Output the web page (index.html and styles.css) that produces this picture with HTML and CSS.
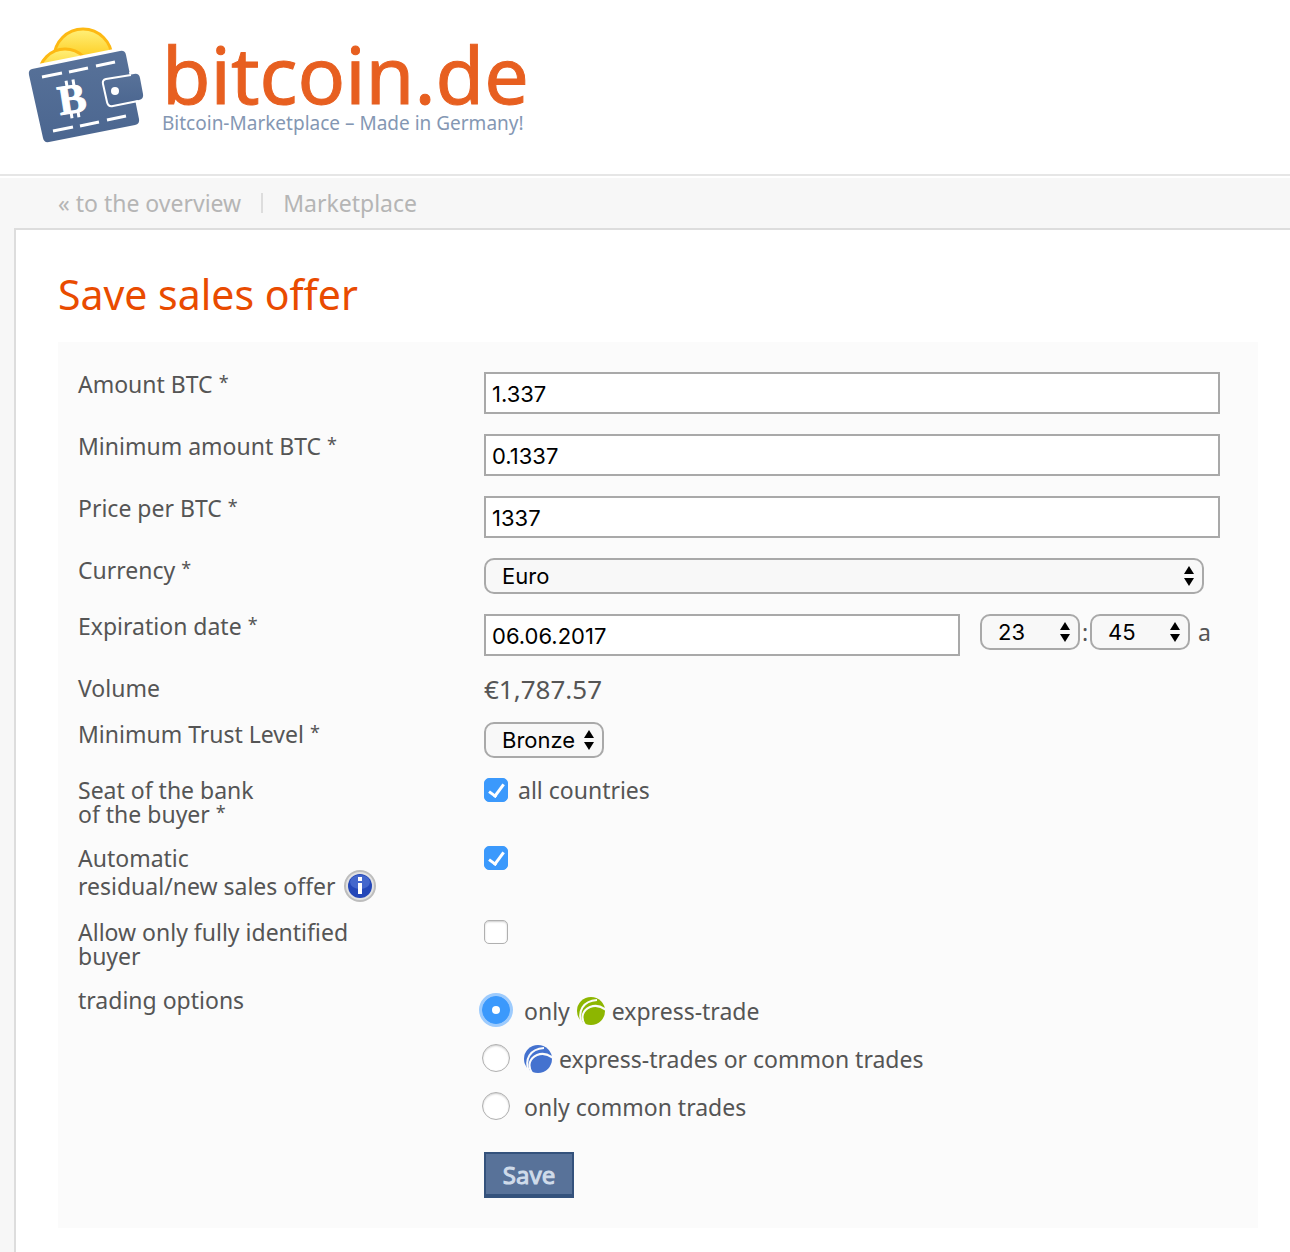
FILE: index.html
```html
<!DOCTYPE html>
<html lang="en">
<head>
  <meta charset="UTF-8">
  <meta name="viewport" content="width=device-width, initial-scale=1.0">
  <title>Save sales offer - bitcoin.de</title>
  <link rel="stylesheet" href="styles.css">
</head>
<body>

  <!-- shared shapes -->
  <svg class="sprite" aria-hidden="true">
    <symbol id="arrows" viewBox="0 0 10 20">
      <path d="M5 0l5 8H0zM5 20l5-8H0z"/>
    </symbol>
    <symbol id="express" viewBox="0 0 28 28">
      <circle cx="14" cy="14" r="14"/>
      <path class="gap" d="M8 28C3 20 6 13 13 10c5-2 11-1 16 3"/>
      <path class="gap" d="M5 27C0 14 6 4 20 3"/>
    </symbol>
  </svg>

  <header class="header">
    <a class="logo" href="#">
      <svg class="wallet" viewBox="28 27 116 116" aria-hidden="true">
        <defs>
          <linearGradient id="coin" x1="0" y1="0" x2="0" y2="1">
            <stop offset="0" stop-color="#fff07a"/>
            <stop offset=".6" stop-color="#fdc60f"/>
          </linearGradient>
          <linearGradient id="leather" x1="0" y1="0" x2="0" y2="1">
            <stop offset="0" stop-color="#587299"/>
            <stop offset="1" stop-color="#4b6690"/>
          </linearGradient>
        </defs>
        <circle cx="83" cy="58" r="29" fill="url(#coin)" stroke="#fdb913" stroke-width="3"/>
        <circle cx="65" cy="75" r="26" fill="url(#coin)" stroke="#fdb913" stroke-width="3"/>
        <path d="M28 66L124 47l5 20-90 70z" fill="#fff"/>
        <path d="M32 69l88-18q5-1 6 4l13 64q1 5-4 6l-86 17q-5 1-6-4L29 75q-1-5 3-6z" fill="url(#leather)"/>
        <path d="M129 72l13-2 8 33-13 2z" fill="#fff"/>
        <path d="M106 79l28-5q5-1 6 4l3 16q1 5-4 6l-26 6q-5 1-6-4l-4-18q-1-4 3-5z" fill="url(#leather)"/>
        <path d="M131 75l-25 4q-4 1-3 5l4 18q1 5 6 4l25-5" fill="none" stroke="#fff" stroke-width="2"/>
        <circle cx="115" cy="91" r="4" fill="#fff"/>
        <path d="M42 77l20-4M69 72l19-4M96 66l19-4M53 131l20-4M80 126l19-4M107 120l19-4" stroke="#fff" stroke-width="3"/>
        <g transform="rotate(-9 72 99)" stroke="#fff" stroke-width="3">
          <path d="M69 80v6M76 80v6M69 112v6M76 112v6"/>
          <text class="wallet-b" x="58" y="113">B</text>
        </g>
      </svg>
      <span class="logo-text">
        <span class="logo-name">bitcoin.de</span>
        <span class="logo-claim">Bitcoin-Marketplace – Made in Germany!</span>
      </span>
    </a>
  </header>

  <nav class="nav">
    <a href="#">« to the overview</a>
    <span class="nav-sep"></span>
    <a href="#">Marketplace</a>
  </nav>

  <main class="content">
    <h1>Save sales offer</h1>

    <form class="form">
      <div class="row">
        <label for="amount">Amount BTC <sup>*</sup></label>
        <input class="text" type="text" id="amount" value="1.337">
      </div>

      <div class="row">
        <label for="min-amount">Minimum amount BTC <sup>*</sup></label>
        <input class="text" type="text" id="min-amount" value="0.1337">
      </div>

      <div class="row">
        <label for="price">Price per BTC <sup>*</sup></label>
        <input class="text" type="text" id="price" value="1337">
      </div>

      <div class="row">
        <label for="currency">Currency <sup>*</sup></label>
        <div class="select currency">
          <select id="currency"><option>Euro</option></select>
          <svg><use href="#arrows"/></svg>
        </div>
      </div>

      <div class="row">
        <label for="date">Expiration date <sup>*</sup></label>
        <div class="expiry">
          <input class="text" type="text" id="date" value="06.06.2017">
          <div class="time">
            <div class="select hour">
              <select aria-label="Hour"><option>23</option></select>
              <svg><use href="#arrows"/></svg>
            </div>
            <span class="colon">:</span>
            <div class="select hour">
              <select aria-label="Minute"><option>45</option></select>
              <svg><use href="#arrows"/></svg>
            </div>
            <span class="suffix">a</span>
          </div>
        </div>
      </div>

      <div class="row">
        <span>Volume</span>
        <span class="volume">€1,787.57</span>
      </div>

      <div class="row">
        <label for="trust">Minimum Trust Level <sup>*</sup></label>
        <div class="select trust">
          <select id="trust"><option>Bronze</option></select>
          <svg><use href="#arrows"/></svg>
        </div>
      </div>

      <div class="row">
        <span>Seat of the bank<br>of the buyer <sup>*</sup></span>
        <label class="check"><input type="checkbox" checked> all countries</label>
      </div>

      <div class="row">
        <label for="residual">Automatic
          <span class="with-info">residual/new sales offer
            <svg class="info" viewBox="0 0 32 32" aria-hidden="true">
              <circle cx="16" cy="16" r="16" fill="#bdbdbd"/>
              <circle cx="16" cy="16" r="14" fill="#e2e2e2"/>
              <circle cx="16" cy="16" r="12" fill="#2447b8"/>
              <ellipse cx="16" cy="12" rx="10" ry="7" fill="#4467cc"/>
              <path d="M14 7h4v4h-4zM14 13h4v11h-4z" fill="#fff"/>
            </svg>
          </span>
        </label>
        <div class="check"><input type="checkbox" id="residual" checked></div>
      </div>

      <div class="row">
        <label for="identified">Allow only fully identified<br>buyer</label>
        <div class="check"><input type="checkbox" id="identified"></div>
      </div>

      <div class="row">
        <span>trading options</span>
        <div class="options">
          <label class="option"><input type="radio" name="trading" checked>
            <span>only</span>
            <svg class="express green" aria-hidden="true"><use href="#express"/></svg>
            <span>express-trade</span>
          </label>
          <label class="option"><input type="radio" name="trading">
            <svg class="express blue" aria-hidden="true"><use href="#express"/></svg>
            <span>express-trades or common trades</span>
          </label>
          <label class="option"><input type="radio" name="trading">
            <span>only common trades</span>
          </label>
          <button class="save" type="button">Save</button>
        </div>
      </div>
    </form>
  </main>

</body>
</html>
```
FILE: styles.css
```css
*{box-sizing:border-box}
body{
  margin:0;
  min-height:100vh;
  display:flex;
  flex-direction:column;
  background:#f7f7f7;
  color:#555;
  font-family:"Noto Sans",sans-serif;
  font-size:23px;
  line-height:24px;
}
a{text-decoration:none}
.sprite{position:absolute;width:0;height:0}

/* header */
.header{
  padding:27px 28px 31px;
  background:#fff;
  border-bottom:2px solid #e6e6e6;
}
.logo{display:flex;gap:18px}
.wallet{width:116px;height:116px;flex:none}
.wallet-b{font:bold 42px "Liberation Serif",serif;fill:#fff;stroke-width:1px}
.logo-text{display:flex;flex-direction:column;padding-top:10px}
.logo-name{
  color:#e75f20;
  font-size:79px;
  line-height:74px;
  -webkit-text-stroke:1px #e75f20;
}
.logo-claim{
  color:#8497b3;
  font-size:19px;
  line-height:24px;
}

.nav{
  display:flex;
  align-items:center;
  height:52px;
  padding-left:58px;
  border-top:2px solid #fff;
}
.nav a{color:#b5b5b5}
.nav-sep{width:2px;height:20px;margin:0 20px;background:#ddd}

/* content */
.content{
  flex:1;
  margin-left:14px;
  padding:40px 32px 24px 42px;
  background:#fff;
  border:solid #ddd;
  border-width:2px 0 0 2px;
}
h1{
  margin:0 0 24px;
  color:#e94b00;
  font-size:41px;
  font-weight:400;
  line-height:48px;
}

.form{
  display:flex;
  flex-direction:column;
  gap:20px;
  padding:30px 38px 30px 20px;
  background:#fbfbfb;
}
.row{
  display:grid;
  grid-template-columns:386px 1fr;
  column-gap:20px;
  align-items:start;
}
sup{font-size:18px;line-height:0;vertical-align:4px}

.text,select{
  width:100%;
  color:#000;
  font-family:Inter,sans-serif;
  font-size:22px;
  border:2px solid #a9a9a9;
}
.text{height:42px;padding:3px 6px 1px;background:#fff}
.select{position:relative;height:36px}
select{
  display:block;
  height:36px;
  padding:0 16px;
  appearance:none;
  background:#f8f8f8;
  border-radius:10px;
}
.select svg{
  position:absolute;
  top:8px;
  right:10px;
  width:10px;
  height:20px;
  pointer-events:none;
}
.currency{margin-right:16px}
.trust{width:120px}
.hour{width:100px}

.expiry{display:flex;gap:20px}
.expiry .text{flex:1;min-width:0}
.time{display:flex;line-height:36px}
.colon{width:10px;text-align:center}
.suffix{width:30px;padding-left:8px}
.volume{font-size:26px;line-height:26px}

/* tick boxes and radios */
.check{display:flex;align-items:center;gap:10px;height:24px}
input[type=checkbox],
input[type=radio]{
  position:relative;
  flex:none;
  margin:0;
  appearance:none;
  background:#fff;
  border:1px solid #b0b0b0;
  box-shadow:inset 0 1px 2px #ccc;
}
input[type=checkbox]{width:24px;height:24px;border-radius:5px}
input[type=radio]{width:28px;height:28px;border-radius:50%}
input:checked{background:#3b99fc;border-color:#3b99fc;box-shadow:none}
input[type=checkbox]:checked::after{
  content:"";
  box-sizing:border-box;
  position:absolute;
  left:7px;
  top:2px;
  width:9px;
  height:16px;
  border:solid #fff;
  border-width:0 3px 3px 0;
  transform:rotate(36deg);
}
input[type=radio]:checked{box-shadow:0 0 0 3px #9dcbfd}
input[type=radio]:checked::after{
  content:"";
  position:absolute;
  left:9px;
  top:9px;
  width:8px;
  height:8px;
  border-radius:50%;
  background:#fff;
}

.with-info{display:flex;align-items:center;gap:8px;height:30px;padding-top:2px}
.info{width:32px;height:32px}

.options{
  display:flex;
  flex-direction:column;
  align-items:flex-start;
  margin-left:-2px;
  padding-top:8px;
}
.option{display:flex;align-items:center;gap:7px;height:28px;margin-bottom:20px}
.option input{margin-right:7px}
.option span,.express{margin-top:2px}
.express{width:28px;height:28px}
.gap{fill:none;stroke:#fbfbfb;stroke-width:2}
.green{fill:#8db600}
.blue{fill:#4472cf}

.save{
  width:90px;
  height:46px;
  margin:12px 0 0 2px;
  padding:0;
  color:#cfdbea;
  background:#587299;
  border:2px solid #34527c;
  border-bottom-width:4px;
  font-family:inherit;
  font-size:24px;
  -webkit-text-stroke:1px #cfdbea;
}
```
